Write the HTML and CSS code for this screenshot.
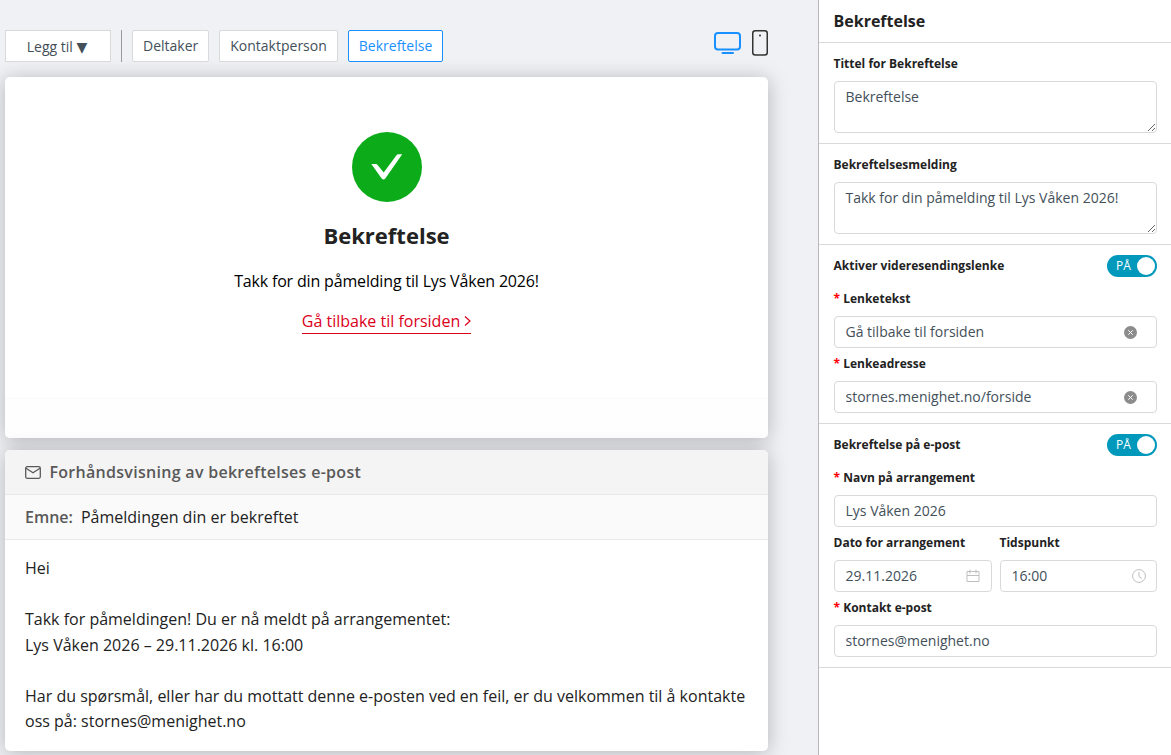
FILE: index.html
```html
<!DOCTYPE html>
<html lang="no">
<head>
    <meta charset="UTF-8">
    <meta name="viewport" content="width=device-width, initial-scale=1.0">
    <title>Bekreftelse</title>
    <link rel="stylesheet" href="styles.css">
</head>
<body>
    <main class="editor">
        <div class="toolbar">
            <button type="button" class="btn btn-add">Legg til <span>▼</span></button>
            <span class="divider"></span>
            <div class="tabs">
                <button type="button" class="btn">Deltaker</button>
                <button type="button" class="btn">Kontaktperson</button>
                <button type="button" class="btn active">Bekreftelse</button>
            </div>
            <div class="devices">
                <svg width="28" height="24" viewBox="0 0 28 24" fill="none" stroke="#1890ff" stroke-width="2">
                    <rect x="1" y="3" width="25" height="16.500" rx="3"/>
                    <path d="M8.500 23h10.500" stroke-linecap="round"/>
                </svg>
                <svg width="16" height="26" viewBox="0 0 16 26" fill="none" stroke="#333" stroke-width="1.500">
                    <rect x=".75" y=".75" width="14.500" height="24.200" rx="2.500"/>
                    <circle cx="8" cy="5.500" r="1" fill="#333" stroke="none"/>
                </svg>
            </div>
        </div>

        <section class="card confirmation">
            <div class="confirmation-body">
                <svg class="check" width="70" height="70" viewBox="0 0 70 70">
                    <circle cx="35" cy="35" r="35" fill="#0bab1a"/>
                    <path d="M19.300 32h4.500q1 0 1.600.8l6.300 7.700 12.600-17q.8-1.200 2.200-1.200h3.700L33.300 46.500q-1.800 2-3.600 0z" fill="#fff"/>
                </svg>
                <h2>Bekreftelse</h2>
                <p>Takk for din påmelding til Lys Våken 2026!</p>
                <a class="back-link">Gå tilbake til forsiden
                    <svg width="7" height="10" viewBox="0 0 7 10" fill="none" stroke="#dc001b" stroke-width="1.200"><path d="M1 .5l5 4.500-5 4.500"/></svg>
                </a>
            </div>
            <div class="confirmation-footer"></div>
        </section>

        <section class="card mail">
            <div class="mail-header">
                <svg width="16" height="13" viewBox="0 0 16 13" fill="none" stroke="#595959" stroke-width="1.300">
                    <rect x=".7" y=".7" width="14.600" height="11.600" rx="1.500"/>
                    <path d="M1 2.200l7 4.600 7-4.600"/>
                </svg>
                <span>Forhåndsvisning av bekreftelses e-post</span>
            </div>
            <div class="mail-subject"><b>Emne:</b><span>Påmeldingen din er bekreftet</span></div>
            <div class="mail-body">
                Hei<br><br>
                Takk for påmeldingen! Du er nå meldt på arrangementet:<br>
                Lys Våken 2026 – 29.11.2026 kl. 16:00<br><br>
                Har du spørsmål, eller har du mottatt denne e-posten ved en feil, er du velkommen til å kontakte oss på: stornes@menighet.no
            </div>
        </section>
    </main>

    <aside class="settings">
        <h1>Bekreftelse</h1>
        <section class="group">
            <label for="tittel">Tittel for Bekreftelse</label>
            <textarea id="tittel">Bekreftelse</textarea>
        </section>
        <section class="group">
            <label for="melding">Bekreftelsesmelding</label>
            <textarea id="melding">Takk for din påmelding til Lys Våken 2026!</textarea>
        </section>
        <section class="group">
            <div class="switch-row">
                <label>Aktiver videresendingslenke</label>
                <button type="button" class="switch"><span>PÅ</span><i></i></button>
            </div>
            <div class="field first">
                <label class="required" for="lenketekst">Lenketekst</label>
                <div class="input clearable">
                    <input type="text" id="lenketekst" value="Gå tilbake til forsiden">
                    <svg width="13" height="13" viewBox="0 0 13 13"><circle cx="6.500" cy="6.500" r="6.500" fill="#8c8c8c"/><path d="M4.300 4.300l4.400 4.400M8.700 4.300L4.300 8.700" stroke="#fff"/></svg>
                </div>
            </div>
            <div class="field">
                <label class="required" for="lenkeadresse">Lenkeadresse</label>
                <div class="input clearable">
                    <input type="text" id="lenkeadresse" value="stornes.menighet.no/forside">
                    <svg width="13" height="13" viewBox="0 0 13 13"><circle cx="6.500" cy="6.500" r="6.500" fill="#8c8c8c"/><path d="M4.300 4.300l4.400 4.400M8.700 4.300L4.300 8.700" stroke="#fff"/></svg>
                </div>
            </div>
        </section>
        <section class="group">
            <div class="switch-row">
                <label>Bekreftelse på e-post</label>
                <button type="button" class="switch"><span>PÅ</span><i></i></button>
            </div>
            <div class="field first">
                <label class="required" for="navn">Navn på arrangement</label>
                <div class="input"><input type="text" id="navn" value="Lys Våken 2026"></div>
            </div>
            <div class="field-row">
                <div class="field">
                    <label for="dato">Dato for arrangement</label>
                    <div class="input">
                        <input type="text" id="dato" value="29.11.2026">
                        <svg width="14" height="14" viewBox="0 0 14 14" fill="none" stroke="#bfbfbf"><path d="M1 2.500h12v10H1zM1 6.500h12M4 .5v4M10 .5v4"/></svg>
                    </div>
                </div>
                <div class="field">
                    <label for="tid">Tidspunkt</label>
                    <div class="input time">
                        <input type="text" id="tid" value="16:00">
                        <svg width="14" height="14" viewBox="0 0 14 14" fill="none" stroke="#bfbfbf"><circle cx="7" cy="7" r="6.400"/><path d="M7 3v4.500l2.800 2"/></svg>
                    </div>
                </div>
            </div>
            <div class="field">
                <label class="required" for="epost">Kontakt e-post</label>
                <div class="input"><input type="text" id="epost" value="stornes@menighet.no"></div>
            </div>
        </section>
    </aside>
</body>
</html>
```
FILE: styles.css
```css
* {
    box-sizing: border-box;
}
body {
    margin: 0;
    height: 755px;
    display: flex;
    overflow: hidden;
    background: #f0f1f5;
    color: #222;
    font-family: "Open Sans", sans-serif;
    font-size: 14px;
}
button, input, textarea {
    font-family: inherit;
    font-size: 14px;
    color: #43505a;
}
svg {
    display: block;
    flex-shrink: 0;
}

/* Forhåndsvisning */
.editor {
    width: 818px;
    padding: 30px 50px 0 5px;
}
.toolbar {
    display: flex;
    height: 32px;
    margin-bottom: 15px;
}
.btn {
    height: 32px;
    padding: 0 10px;
    background: #fff;
    border: 1px solid #d9d9d9;
    border-radius: 2px;
    line-height: 30px;
    white-space: nowrap;
}
.btn-add {
    width: 106px;
    border-radius: 0;
    padding: 1px 11px 0 9px;
}
.btn-add span {
    font-family: "DejaVu Sans", sans-serif;
    line-height: 1;
}
.btn.active {
    color: #1890ff;
    border-color: #1890ff;
}
.divider {
    width: 1px;
    margin: 0 10px;
    background: #999;
}
.tabs {
    display: flex;
    gap: 10px;
}
.devices {
    display: flex;
    gap: 10px;
    margin-left: auto;
}
.card {
    width: 763px;
    background: #fff;
    border-radius: 5px;
    box-shadow: 0 2px 20px rgba(0, 0, 0, 0.25);
    overflow: hidden;
}
.confirmation {
    height: 361px;
    margin-bottom: 12px;
    color: #000;
    font-size: 16px;
}
.confirmation-body {
    display: flex;
    flex-direction: column;
    align-items: center;
    height: 321px;
    padding-top: 55px;
}
.confirmation h2 {
    margin: 15px 0 0;
    color: #222;
    font-size: 22px;
    line-height: 36px;
}
.confirmation p {
    margin: 15px 0 0;
    line-height: 26px;
    letter-spacing: -0.17px;
}
.back-link {
    display: flex;
    align-items: center;
    gap: 4px;
    height: 26px;
    margin-top: 14px;
    color: #dc001b;
    border-bottom: 1px solid #dc001b;
}
.confirmation-footer {
    height: 40px;
    border-top: 1px solid #fafafa;
    background: #fefefe;
}
.mail {
    font-size: 16px;
    line-height: 25.5px;
}
.mail-header, .mail-subject {
    display: flex;
    align-items: center;
    height: 45px;
    padding: 1px 20px 0;
    border-bottom: 1px solid #e8e8e8;
}
.mail-header {
    gap: 8.5px;
    background: #f4f4f4;
    color: #595959;
    font-weight: 600;
    letter-spacing: 0.29px;
}
.mail-subject {
    gap: 8px;
    background: #fafafa;
}
.mail-subject b {
    color: #595959;
    font-weight: 600;
}
.mail-body {
    height: 211px;
    padding: 16px 20px;
}

/* Innstillinger */
.settings {
    flex: 1;
    background: #fff;
    border-left: 1px solid #b8b8b8;
}
.settings h1 {
    height: 43px;
    margin: 0;
    padding-left: 14.5px;
    border-bottom: 1px solid #d9d9d9;
    font-size: 16px;
    line-height: 42px;
}
.group {
    padding: 10px 14px 10px 15px;
    border-bottom: 1px solid #d9d9d9;
}
.group label {
    display: block;
    margin: 0 0 6px -0.5px;
    font-size: 12px;
    font-weight: 700;
    line-height: 22px;
}
.required::before {
    content: "* ";
    color: #ff0000;
}
textarea {
    display: block;
    width: 100%;
    height: 52px;
    padding: 4px 10.5px;
    border: 1px solid #d9d9d9;
    border-radius: 4px;
    line-height: 22px;
    resize: vertical;
}
.input {
    display: flex;
    align-items: center;
    height: 32px;
    padding: 0 11px 0 10.5px;
    border: 1px solid #d9d9d9;
    border-radius: 4px;
}
.input input {
    flex: 1;
    min-width: 0;
    padding: 0 0 2px;
    border: 0;
    outline: 0;
    background: none;
}
.input.clearable {
    padding-right: 19px;
}
.input.time {
    padding-right: 10px;
}
.field {
    padding-top: 5px;
}
.field.first {
    padding-top: 11px;
}
.field-row {
    display: grid;
    grid-template-columns: 158px 157px;
    gap: 8px;
}
.switch-row {
    display: flex;
    justify-content: space-between;
    height: 22px;
}
.switch {
    display: flex;
    align-items: center;
    justify-content: space-between;
    width: 50px;
    height: 22px;
    padding: 0 2px 0 9px;
    border: 0;
    border-radius: 11px;
    background: #0099bc;
    color: #fff;
    font-size: 12px;
    line-height: 20px;
}
.switch i {
    width: 18px;
    height: 18px;
    border-radius: 50%;
    background: #fff;
}
```
